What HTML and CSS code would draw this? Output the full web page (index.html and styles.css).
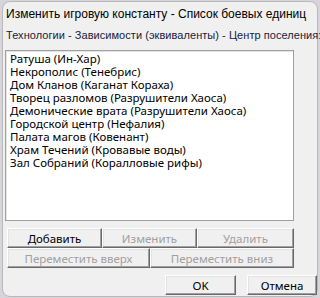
FILE: index.html
```html
<!DOCTYPE html>
<html lang="ru">
<head>
    <meta charset="UTF-8">
    <title>Изменить игровую константу</title>
    <link rel="stylesheet" href="styles.css">
</head>
<body>
    <div class="window">
        <div class="title">Изменить игровую константу - Список боевых единиц</div>
        <div class="content">
            <div class="caption">Технологии - Зависимости (эквиваленты) - Центр поселения:</div>
            <div class="listbox">
                <div class="item">Ратуша (Ин-Хар)</div>
                <div class="item">Некрополис (Тенебрис)</div>
                <div class="item">Дом Кланов (Каганат Кораха)</div>
                <div class="item">Творец разломов (Разрушители Хаоса)</div>
                <div class="item">Демонические врата (Разрушители Хаоса)</div>
                <div class="item">Городской центр (Нефалия)</div>
                <div class="item">Палата магов (Ковенант)</div>
                <div class="item">Храм Течений (Кровавые воды)</div>
                <div class="item">Зал Собраний (Коралловые рифы)</div>
            </div>
            <div class="row three">
                <button class="btn">Добавить</button>
                <button class="btn" disabled>Изменить</button>
                <button class="btn" disabled>Удалить</button>
            </div>
            <div class="row two">
                <button class="btn" disabled>Переместить вверх</button>
                <button class="btn" disabled>Переместить вниз</button>
            </div>
            <div class="footer">
                <button class="btn ok">OK</button>
                <button class="btn cancel">Отмена</button>
            </div>
        </div>
    </div>
</body>
</html>
```
FILE: styles.css
```css
body {
    margin: 0;
    background: #d8d4dc;
    font-family: "Liberation Sans", Arial, sans-serif;
    overflow: hidden;
}
.window {
    width: 314px;
    height: 294px;
    margin: 1px 0 0 2px;
    background: #f0f0f0;
    border: 1px solid #b9b9b9;
    border-radius: 8px;
}
.title {
    height: 26px;
    line-height: 24px;
    padding-left: 3px;
    font-size: 12px;
    color: #000;
    white-space: nowrap;
}
.content {
    padding: 0 0 0 2px;
}
.caption {
    font-size: 11px;
    letter-spacing: 0.05px;
    color: #1a1a3a;
    white-space: nowrap;
    height: 22px;
    line-height: 14px;
    padding-left: 1px;
}
.listbox {
    width: 289px;
    height: 171px;
    background: #fff;
    border: 1px solid #a0a0a0;
    box-shadow: inset 1px 1px #e3e3e3;
    padding: 1px 0 0 4px;
    box-sizing: border-box;
}
.item {
    font-family: "Noto Sans", sans-serif;
    font-size: 11.5px;
    line-height: 13px;
    height: 13px;
    color: #000;
    white-space: nowrap;
}
.row {
    display: grid;
    margin-left: 2px;
    width: 287px;
}
.row.three {
    grid-template-columns: 95px 95px 97px;
    margin-top: 7px;
}
.row.two {
    grid-template-columns: 143px 144px;
}
.btn {
    height: 20px;
    padding: 0;
    font-family: "Noto Sans", sans-serif;
    font-size: 11.5px;
    color: #000;
    background: #f0f0f0;
    border-top: 1px solid #fff;
    border-left: 1px solid #fff;
    border-right: 1px solid #696969;
    border-bottom: 1px solid #696969;
    box-shadow: inset -1px -1px #a0a0a0, inset 1px 1px #e3e3e3;
}
.btn:disabled {
    color: #a0a0a0;
}
.footer {
    display: flex;
    gap: 11px;
    margin: 7px 0 0 160px;
}
.ok {
    width: 71px;
}
.cancel {
    width: 70px;
}
```
